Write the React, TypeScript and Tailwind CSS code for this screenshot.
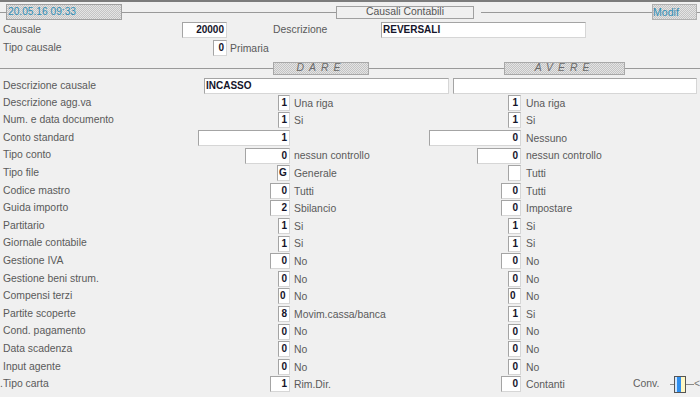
import React from 'react';

type Field = { w: string; v: string; t: string; left?: boolean };
type Row = { label: string; d: Field; a: Field };

const hatch =
  'bg-[image:repeating-conic-gradient(#c4c4c4_0_25%,#e4e4e4_0_50%)] bg-[length:2px_2px]';

const rows: Row[] = [
  { label: 'Descrizione agg.va', d: { w: 'w-[12px]', v: '1', t: 'Una riga' }, a: { w: 'w-[13px]', v: '1', t: 'Una riga' } },
  { label: 'Num. e data documento', d: { w: 'w-[12px]', v: '1', t: 'Si' }, a: { w: 'w-[13px]', v: '1', t: 'Si' } },
  { label: 'Conto standard', d: { w: 'w-[92px]', v: '1', t: '' }, a: { w: 'w-[92px]', v: '0', t: 'Nessuno' } },
  { label: 'Tipo conto', d: { w: 'w-[45px]', v: '0', t: 'nessun controllo' }, a: { w: 'w-[44px]', v: '0', t: 'nessun controllo' } },
  { label: 'Tipo file', d: { w: 'w-[13px]', v: 'G', t: 'Generale', left: true }, a: { w: 'w-[13px]', v: '', t: 'Tutti' } },
  { label: 'Codice mastro', d: { w: 'w-[20px]', v: '0', t: 'Tutti' }, a: { w: 'w-[20px]', v: '0', t: 'Tutti' } },
  { label: 'Guida importo', d: { w: 'w-[20px]', v: '2', t: 'Sbilancio' }, a: { w: 'w-[20px]', v: '0', t: 'Impostare' } },
  { label: 'Partitario', d: { w: 'w-[12px]', v: '1', t: 'Si' }, a: { w: 'w-[13px]', v: '1', t: 'Si' } },
  { label: 'Giornale contabile', d: { w: 'w-[12px]', v: '1', t: 'Si' }, a: { w: 'w-[13px]', v: '1', t: 'Si' } },
  { label: 'Gestione IVA', d: { w: 'w-[20px]', v: '0', t: 'No' }, a: { w: 'w-[20px]', v: '0', t: 'No' } },
  { label: 'Gestione beni strum.', d: { w: 'w-[12px]', v: '0', t: 'No' }, a: { w: 'w-[13px]', v: '0', t: 'No' } },
  { label: 'Compensi terzi', d: { w: 'w-[12px]', v: '0', t: 'No', left: true }, a: { w: 'w-[13px]', v: '0', t: 'No', left: true } },
  { label: 'Partite scoperte', d: { w: 'w-[12px]', v: '8', t: 'Movim.cassa/banca' }, a: { w: 'w-[13px]', v: '1', t: 'Si' } },
  { label: 'Cond. pagamento', d: { w: 'w-[12px]', v: '0', t: 'No' }, a: { w: 'w-[13px]', v: '0', t: 'No' } },
  { label: 'Data scadenza', d: { w: 'w-[12px]', v: '0', t: 'No' }, a: { w: 'w-[13px]', v: '0', t: 'No' } },
  { label: 'Input agente', d: { w: 'w-[12px]', v: '0', t: 'No' }, a: { w: 'w-[13px]', v: '0', t: 'No' } },
  { label: '.Tipo carta', d: { w: 'w-[20px]', v: '1', t: 'Rim.Dir.' }, a: { w: 'w-[20px]', v: '0', t: 'Contanti' } },
];

function Box({ w, v, left }: { w: string; v: string; left?: boolean }) {
  return (
    <div
      className={`${w} h-[16px] shrink-0 bg-white border border-[#a4a4a4] border-r-[#d6d6d6] border-b-[#d6d6d6] flex items-center leading-none text-[10px] font-bold text-[#14142a] ${
        left ? 'justify-start pl-[1px]' : 'justify-end pr-[2px]'
      }`}
    >
      {v}
    </div>
  );
}

function Line({ w }: { w: string }) {
  return <div className={`${w} h-px bg-[#999999]`} />;
}

export default function App() {
  return (
    <div className="w-[700px] h-[397px] overflow-hidden bg-[#f0f0f0] border-t-2 border-[#7c7c7c] font-['Liberation_Sans',Arial,sans-serif] text-[10.4px] text-[#5a5a5a] leading-none">
      {/* title bar */}
      <div className="flex items-center h-[16px] mt-[2px]">
        <Line w="w-[6px]" />
        <div className={`w-[116px] h-[16px] border border-[#a0a0a0] ${hatch} flex items-center pl-[1px] text-[10.2px] text-[#2e8db5]`}>
          20.05.16 09:33
        </div>
        <Line w="w-[214px]" />
        <div className="w-[138px] h-[13px] border border-[#a0a0a0] flex items-center justify-center text-[#555555]">
          Causali Contabili
        </div>
        <div className="w-[7px]" />
        <Line w="w-[171px]" />
        <div className={`w-[45px] h-[16px] border border-[#b0b0b0] ${hatch} flex items-center text-[10.6px] text-[#2e8db5]`}>
          Modif
        </div>
        <div className="flex-1 h-px bg-[#999999]" />
      </div>

      {/* testata */}
      <div className="flex items-center h-[18px] mt-[1px] pl-[3px]">
        <div className="w-[179px]">Causale</div>
        <Box w="w-[45px]" v="20000" />
        <div className="w-[154px] pl-[46px]">Descrizione</div>
        <Box w="w-[205px]" v="REVERSALI" left />
      </div>
      <div className="flex items-center h-[18px] pl-[3px]">
        <div className="w-[210px]">Tipo causale</div>
        <Box w="w-[14px]" v="0" />
        <div className="ml-[3px] mt-[3px]">Primaria</div>
      </div>

      {/* dare / avere */}
      <div className="flex items-center h-[13px] mt-[5px]">
        <Line w="w-[273px]" />
        <div className={`w-[96px] h-[13px] border border-[#a8a8a8] ${hatch} flex items-center justify-center italic tracking-[5px] text-[#6a6a6a]`}>
          DARE
        </div>
        <Line w="w-[135px]" />
        <div className={`w-[121px] h-[13px] border border-[#a8a8a8] ${hatch} flex items-center justify-center italic tracking-[5px] text-[#6a6a6a]`}>
          AVERE
        </div>
        <div className="flex-1 h-px bg-[#999999]" />
      </div>

      <div className="flex items-center h-[16px] mt-[3px] pl-[3px]">
        <div className="w-[201px]">Descrizione causale</div>
        <Box w="w-[245px]" v="INCASSO" left />
        <div className="w-[4px]" />
        <Box w="w-[244px]" v="" />
      </div>

      {rows.map((r, i) => (
        <div key={r.label} className="flex items-center h-[17.6px]">
          <div className="w-[290px] flex items-center justify-between pl-[3px]">
            <span className={i === rows.length - 1 ? '-ml-[3px]' : ''}>{r.label}</span>
            <Box w={r.d.w} v={r.d.v} left={r.d.left} />
          </div>
          <div className="w-[231px] flex items-center justify-between">
            <span className="pl-[4px] mt-[2px]">{r.d.t}</span>
            <Box w={r.a.w} v={r.a.v} left={r.a.left} />
          </div>
          <span className="pl-[5px] mt-[2px]">{r.a.t}</span>
          {i === rows.length - 1 && (
            <div className="ml-auto w-[67px] flex items-center shrink-0">
              <span className="w-[39px] text-[#606060]">Conv.</span>
              <div className="w-[4px] h-px bg-[#8a8a8a]" />
              <div className="w-[13px] h-[17px] border border-[#555555] bg-[#fff8c4] flex">
                <div className="w-[2px] bg-[#cfe6ff]" />
                <div className="w-[4px] bg-[#2f8ff0]" />
              </div>
              <div className="w-[8px] h-px bg-[#8a8a8a]" />
              <span className="text-[#777777]">&lt;</span>
            </div>
          )}
        </div>
      ))}
    </div>
  );
}
